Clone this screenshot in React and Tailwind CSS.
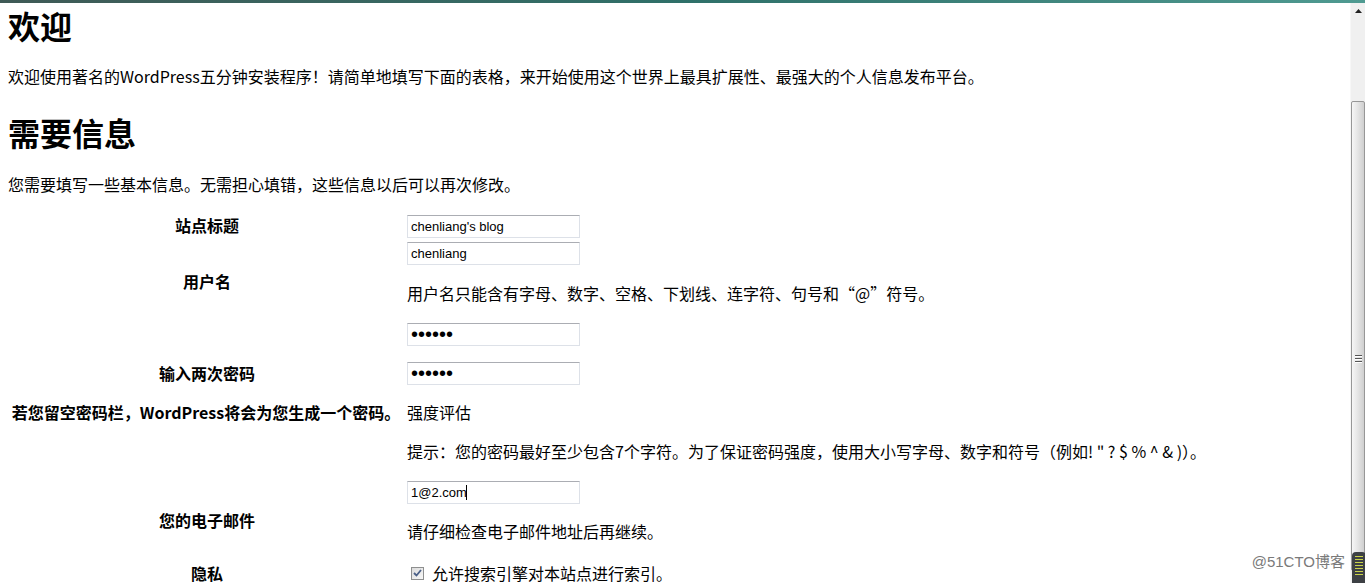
import { useState } from "react";

const cjk = "font-['Noto_Sans_CJK_SC','Noto_Sans',sans-serif]";
const inputCls =
  "h-[23px] w-[173px] border border-[#dde1e8] border-t-[#abadb3] bg-white px-[3px] font-['Liberation_Sans',sans-serif] text-[13px] text-black outline-none";

const Label = ({ children }) => (
  <div className={`w-[398px] shrink-0 text-center text-[16px] font-bold leading-[22px] ${cjk}`}>
    {children}
  </div>
);

const Scrollbar = () => (
  <div className="relative w-[15px] shrink-0 border-l border-[#f7f7f7] bg-[#f0f0f0]">
    <svg className="absolute left-[4px] top-[6px]" width="7" height="4" viewBox="0 0 7 4">
      <path d="M3.5 0 L7 4 L0 4 Z" fill="#222" />
    </svg>
    <div className="absolute left-[0px] top-[98px] h-[470px] w-[14px] rounded-[2px] border border-[#979797] bg-gradient-to-r from-[#f6f6f6] via-[#e4e4e4] to-[#cfcfcf]">
      <div className="absolute left-[3px] top-[253px] flex flex-col gap-[2px]">
        <span className="h-[1px] w-[7px] bg-[#555] shadow-[0_1px_0_#fff]" />
        <span className="h-[1px] w-[7px] bg-[#555] shadow-[0_1px_0_#fff]" />
        <span className="h-[1px] w-[7px] bg-[#555] shadow-[0_1px_0_#fff]" />
      </div>
    </div>
    <div className="absolute bottom-0 left-[1px] flex h-[31px] w-[14px] flex-col items-center gap-[2px] rounded-t-[4px] bg-[#3d4044] pt-[4px]">
      {[0, 1, 2, 3, 4, 5, 6].map((i) => (
        <span key={i} className="h-[1px] w-[8px] bg-[#c9d24a]" />
      ))}
    </div>
  </div>
);

const App = () => {
  const [site, setSite] = useState("chenliang's blog");
  const [user, setUser] = useState("chenliang");
  const [pass1, setPass1] = useState("123456");
  const [pass2, setPass2] = useState("123456");
  const [email, setEmail] = useState("1@2.com");

  return (
    <div className={`relative h-[583px] w-full overflow-hidden bg-white text-black ${cjk}`}>
      <div className="h-[3px] w-full bg-gradient-to-r from-[#3f5a56] via-[#2f7069] to-[#4f9a91]" />
      <div className="flex h-[580px]">
        <div className="flex-1 pl-[8px]">
          <h1 className="mt-[2px] text-[32px] font-bold leading-[40px]">欢迎</h1>
          <p className="mt-[19px] text-[16px] leading-[24px]">
            欢迎使用著名的WordPress五分钟安装程序！请简单地填写下面的表格，来开始使用这个世界上最具扩展性、最强大的个人信息发布平台。
          </p>
          <h2 className="mt-[24px] text-[32px] font-bold leading-[40px]">需要信息</h2>
          <p className="mt-[20px] text-[16px] leading-[24px]">
            您需要填写一些基本信息。无需担心填错，这些信息以后可以再次修改。
          </p>

          <form className="mt-[16px] text-[16px]" onSubmit={(e) => e.preventDefault()}>
            <div className="flex items-center">
              <Label>站点标题</Label>
              <div className="pl-[1px]">
                <input className={inputCls} value={site} onChange={(e) => setSite(e.target.value)} />
              </div>
            </div>

            <div className="mt-[4px] flex items-center">
              <Label>用户名</Label>
              <div className="pl-[1px]">
                <input className={`block ${inputCls}`} value={user} onChange={(e) => setUser(e.target.value)} />
                <p className="mb-[16px] mt-[17px] leading-[22px]">
                  用户名只能含有字母、数字、空格、下划线、连字符、句号和“@”符号。
                </p>
              </div>
            </div>

            <div className="mt-[3px] flex items-center">
              <div className={`w-[398px] shrink-0 text-center text-[16px] font-bold leading-[22px] ${cjk}`}>
                <div>输入两次密码</div>
                <p className="mb-[16px] mt-[17px] pl-[2px] pr-[4px]">若您留空密码栏，WordPress将会为您生成一个密码。</p>
              </div>
              <div className="pl-[1px]">
                <input
                  type="password"
                  className={`block ${inputCls} text-[20px] leading-[20px]`}
                  value={pass1}
                  onChange={(e) => setPass1(e.target.value)}
                />
                <input
                  type="password"
                  className={`mt-[16px] block ${inputCls} text-[20px] leading-[20px]`}
                  value={pass2}
                  onChange={(e) => setPass2(e.target.value)}
                />
                <div className="mt-[16px] leading-[22px]">强度评估</div>
                <p className="mb-[15px] mt-[17px] whitespace-nowrap leading-[22px]">
                  提示：您的密码最好至少包含7个字符。为了保证密码强度，使用大小写字母、数字和符号（例如! " ? $ % ^ &amp; )）。
                </p>
              </div>
            </div>

            <div className="mt-[4px] flex items-center">
              <Label>您的电子邮件</Label>
              <div className="pl-[1px]">
                <div className="relative w-[173px]">
                  <input className={`block ${inputCls}`} value={email} onChange={(e) => setEmail(e.target.value)} />
                  <span className="absolute left-[59px] top-[4px] h-[15px] w-[1px] bg-black" />
                </div>
                <p className="mb-[16px] mt-[16px] leading-[22px]">请仔细检查电子邮件地址后再继续。</p>
              </div>
            </div>

            <div className="mt-[4px] flex items-center">
              <Label>隐私</Label>
              <label className="flex items-center pl-[1px] leading-[22px]">
                <span className="ml-[4px] mr-[8px] flex h-[13px] w-[13px] items-center justify-center border border-[#8e8f8f] bg-gradient-to-br from-[#dcdcdc] to-[#f7f7f7]">
                  <svg width="9" height="8" viewBox="0 0 9 8">
                    <path d="M1 4 L3.5 6.5 L8 1" stroke="#4a5f87" strokeWidth="1.8" fill="none" />
                  </svg>
                </span>
                允许搜索引擎对本站点进行索引。
              </label>
            </div>
          </form>
        </div>
        <Scrollbar />
      </div>

      <div className="absolute bottom-[10px] right-[20px] font-['Liberation_Sans','Noto_Sans_CJK_SC',sans-serif] text-[15px] text-[#7a7a7a] [text-shadow:0_0_2px_#fff,0_0_2px_#fff]">
        @51CTO博客
      </div>
    </div>
  );
};

export default App;
